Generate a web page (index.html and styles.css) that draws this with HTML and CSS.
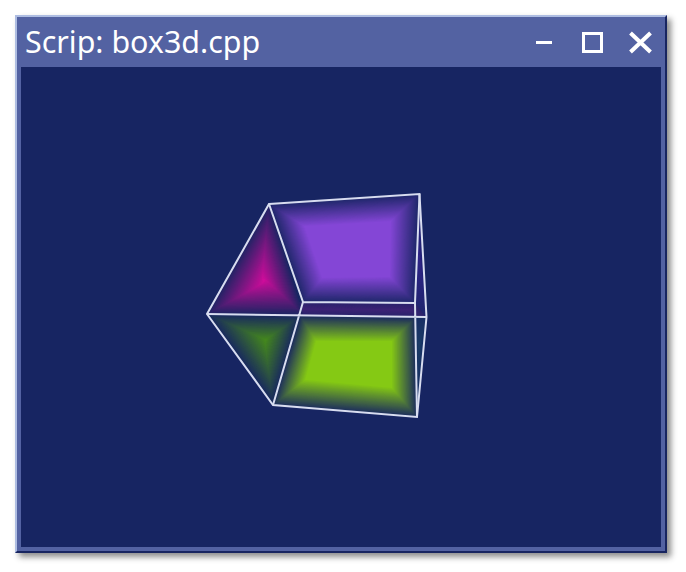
FILE: index.html
```html
<!DOCTYPE html>
<html lang="en">
<head>
<meta charset="utf-8">
<title>Scrip: box3d.cpp</title>
<link rel="stylesheet" href="styles.css">
</head>
<body>
<main class="window">
  <header class="titlebar">
    <h1 class="title">Scrip: box3d.cpp</h1>
    <div class="controls">
      <svg class="ctl ctl-min" viewBox="0 0 16 3"><rect width="16" height="3"/></svg>
      <svg class="ctl ctl-max" viewBox="0 0 21 21"><rect x="1.5" y="1.5" width="18" height="18"/></svg>
      <svg class="ctl ctl-close" viewBox="0 0 23 23"><path d="M1.500 2 21.500 21M21.500 2 1.500 21"/></svg>
    </div>
  </header>
  <div class="viewport">
    <svg class="scene" viewBox="21 67 640 480">
      <g id="faces"></g>
      <g class="edges">
        <path d="M269 204 419.500 194 426.500 317 417 417 273 405 207 314Z"/>
        <path d="M269 204 303 302 415 303 419.500 194M303 302 273 405M415 303 417 417M207 314 426.500 317"/>
      </g>
    </svg>
  </div>
</main>
<script src="scene.js"></script>
</body>
</html>
```
FILE: styles.css
```css
html, body {
  margin: 0;
  background: #fff;
}
body {
  padding: 15px;
  width: 686px;
  height: 572px;
  box-sizing: border-box;
  overflow: hidden;
}
.window {
  width: 652px;
  height: 538px;
  box-sizing: border-box;
  display: flex;
  flex-direction: column;
  background: #5362a2;
  border: 2px solid;
  border-color: #aebde2 #182560 #182560 #aebde2;
  box-shadow: 4px 4px 6px rgba(0, 0, 0, .45);
}
.titlebar {
  height: 50px;
  flex: none;
  display: flex;
  align-items: center;
  justify-content: space-between;
  padding: 0 13px 0 8px;
}
.title {
  margin: 0;
  font: 400 30.400px/48px "Noto Sans", "Open Sans", sans-serif;
  color: #fff;
}
.controls {
  display: flex;
  align-items: center;
  padding-top: 1px;
}
.ctl { display: block; }
.ctl-min { width: 16px; height: 3px; fill: #fff; margin-right: 30px; }
.ctl-max { width: 21px; height: 21px; fill: none; stroke: #fff; stroke-width: 3; margin-right: 26px; }
.ctl-close { width: 23px; height: 23px; fill: none; stroke: #fff; stroke-width: 4; }
.viewport {
  flex: 1;
  margin: 0 4px 4px;
  background: #172562;
}
.scene {
  display: block;
  width: 640px;
  height: 480px;
}
.edges path {
  fill: none;
  stroke: #d8ddf0;
  stroke-width: 2;
  stroke-linejoin: miter;
}
```
FILE: scene.js
```js
// Pillow-shaded cube faces: nested polygons from the outer edge to the plateau.
const BG = [23, 37, 98];
const FACES = [
  { outer: [[419,194],[426,317],[415,318],[415,303]], inner: [[418,255],[420,255],[420,257],[418,257]], color: [48,36,136], edge: .3 },
  { outer: [[303,302],[415,303],[426,317],[207,314]], inner: [[300,309],[410,310],[410,310],[300,309]], color: [62,36,118], edge: .5 },
  { outer: [[269,204],[419,194],[415,303],[303,302]], inner: [[304,226],[391,221],[390,277],[322,278]], color: [132,70,214], edge: .08 },
  { outer: [[269,204],[303,314],[207,314]], inner: [[262,279],[265,279],[264,283]], color: [206,12,155], edge: .06 },
  { outer: [[207,314],[300,316],[273,405]], inner: [[264,339],[267,339],[265,343]], color: [68,134,30], edge: .05 },
  { outer: [[300,316],[415,318],[417,417],[273,405]], inner: [[316,341],[392,341],[392,388],[305,380]], color: [133,201,20], edge: .06 },
  { outer: [[415,318],[426,317],[417,417]], inner: [[418,345],[420,345],[419,350]], color: [28,60,104], edge: .4 }
];
const STEPS = 28;
const NS = "http://www.w3.org/2000/svg";
const layer = document.getElementById("faces");
for (const face of FACES) {
  for (let i = 0; i <= STEPS; i++) {
    const t = i / STEPS;
    const pts = face.outer.map((p, k) => [
      p[0] + (face.inner[k][0] - p[0]) * t,
      p[1] + (face.inner[k][1] - p[1]) * t
    ].map(v => v.toFixed(2)).join(",")).join(" ");
    const v = face.edge + (1 - face.edge) * t;
    const rgb = BG.map((b, c) => Math.round(b + (face.color[c] - b) * v));
    const poly = document.createElementNS(NS, "polygon");
    poly.setAttribute("points", pts);
    poly.setAttribute("fill", `rgb(${rgb})`);
    layer.appendChild(poly);
  }
}
```
